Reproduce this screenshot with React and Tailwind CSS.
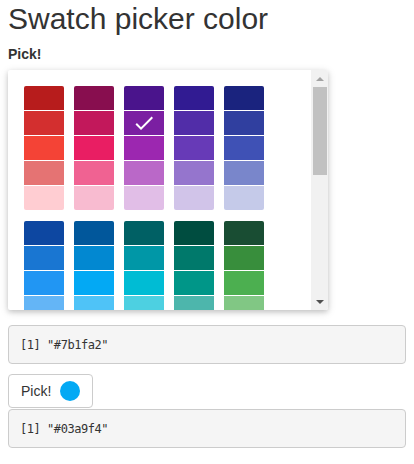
import React, { useState } from "react";

const groups = [
  ["#b71c1c", "#d32f2f", "#f44336", "#e57373", "#ffcdd2"],
  ["#880e4f", "#c2185b", "#e91e63", "#f06292", "#f8bbd0"],
  ["#4a148c", "#7b1fa2", "#9c27b0", "#ba68c8", "#e1bee7"],
  ["#311b92", "#512da8", "#673ab7", "#9575cd", "#d1c4e9"],
  ["#1a237e", "#303f9f", "#3f51b5", "#7986cb", "#c5cae9"],
  ["#0d47a1", "#1976d2", "#2196f3", "#64b5f6", "#bbdefb"],
  ["#01579b", "#0288d1", "#03a9f4", "#4fc3f7", "#b3e5fc"],
  ["#006064", "#0097a7", "#00bcd4", "#4dd0e1", "#b2ebf2"],
  ["#004d40", "#00796b", "#009688", "#4db6ac", "#b2dfdb"],
  ["#194d33", "#388e3c", "#4caf50", "#81c784", "#c8e6c9"],
];

const Check = () => (
  <svg viewBox="0 0 24 24" className="h-6 w-6" fill="#fff">
    <path d="M21,7L9,19L3.5,13.5L4.91,12.09L9,16.17L19.59,5.59L21,7Z" />
  </svg>
);

const Swatches = ({ value, onChange }) => (
  <div className="mt-[6px] flex h-[240px] w-[320px] overflow-hidden rounded-[2px] bg-white shadow-[0_2px_10px_rgba(0,0,0,0.12),0_2px_5px_rgba(0,0,0,0.16)]">
    <div className="flex-1 overflow-hidden pl-4 pt-4">
      <div className="flex flex-wrap">
        {groups.map((group, gi) => (
          <div key={gi} className="mr-[10px] w-10 pb-[10px]">
            {group.map((c, i) => (
              <div
                key={c}
                onClick={() => onChange(c)}
                style={{ backgroundColor: c }}
                className={
                  "mb-px flex h-6 w-10 cursor-pointer items-center justify-center" +
                  (i === 0 ? " rounded-t-[2px]" : "") +
                  (i === 4 ? " rounded-b-[2px]" : "")
                }
              >
                {value === c && <Check />}
              </div>
            ))}
          </div>
        ))}
      </div>
    </div>
    {/* scrollbar */}
    <div className="flex w-[17px] flex-col items-center bg-[#f1f1f1]">
      <div className="flex h-[17px] w-full items-center justify-center">
        <div className="h-0 w-0 border-x-[4px] border-b-[4px] border-x-transparent border-b-[#a3a3a3]" />
      </div>
      <div className="h-[88px] w-[14px] bg-[#c1c1c1]" />
      <div className="flex-1" />
      <div className="flex h-[17px] w-full items-center justify-center">
        <div className="h-0 w-0 border-x-[4px] border-t-[4px] border-x-transparent border-t-[#505050]" />
      </div>
    </div>
  </div>
);

const Output = ({ text, className }) => (
  <pre
    className={
      "flex h-[39px] w-[398px] items-center rounded border border-[#ccc] bg-[#f5f5f5] pl-[11px] font-['DejaVu_Sans_Mono',monospace] text-[12px] tracking-[-0.45px] text-[#333] " +
      className
    }
  >
    {text}
  </pre>
);

export default function App() {
  const [picked, setPicked] = useState("#7b1fa2");
  const [btnColor] = useState("#03a9f4");

  return (
    <div className="px-2 font-['Liberation_Sans',Arial,sans-serif] text-[#333]">
      <h2 className="pt-[2px] text-[30px] leading-[33px]">Swatch picker color</h2>
      <label className="mt-[9px] block text-[14px] font-bold leading-5">Pick!</label>
      <Swatches value={picked} onChange={setPicked} />
      <Output className="mt-[15px]" text={`[1] "${picked}"`} />
      <button
        type="button"
        className="mt-[10px] flex h-[34px] items-center gap-[9px] rounded border border-[#ccc] bg-white px-3 text-[14px] text-[#333]"
      >
        Pick!
        <span className="h-5 w-5 rounded-full" style={{ backgroundColor: btnColor }} />
      </button>
      <Output className="mt-[1px] h-[38px]" text={`[1] "${btnColor}"`} />
    </div>
  );
}
